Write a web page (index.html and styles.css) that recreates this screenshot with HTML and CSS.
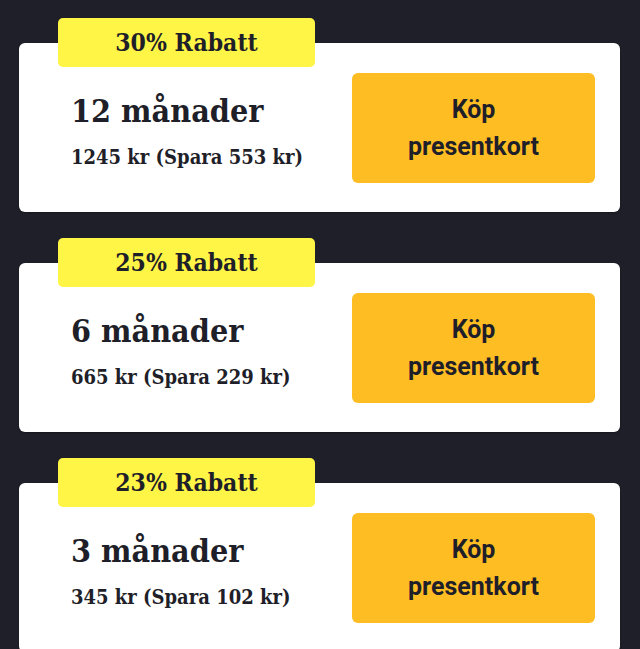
FILE: index.html
```html
<!DOCTYPE html>
<html lang="sv">
<head>
<meta charset="utf-8">
<title>Presentkort</title>
<link rel="stylesheet" href="styles.css">
</head>
<body>
<main class="list">
  <section class="offer">
    <div class="badge">30% Rabatt</div>
    <div class="card">
      <div class="info">
        <h2 class="title">12 månader</h2>
        <p class="price">1245 kr (Spara 553 kr)</p>
      </div>
      <button class="buy">Köp<br>presentkort</button>
    </div>
  </section>
  <section class="offer">
    <div class="badge">25% Rabatt</div>
    <div class="card">
      <div class="info">
        <h2 class="title">6 månader</h2>
        <p class="price">665 kr (Spara 229 kr)</p>
      </div>
      <button class="buy">Köp<br>presentkort</button>
    </div>
  </section>
  <section class="offer">
    <div class="badge">23% Rabatt</div>
    <div class="card">
      <div class="info">
        <h2 class="title">3 månader</h2>
        <p class="price">345 kr (Spara 102 kr)</p>
      </div>
      <button class="buy">Köp<br>presentkort</button>
    </div>
  </section>
</main>
</body>
</html>
```
FILE: styles.css
```css
html, body {
  margin: 0;
  background: #1f1f29;
}
body {
  height: 649px;
  overflow: hidden;
}
.list {
  display: flex;
  flex-direction: column;
  gap: 26px;
  padding: 18px 20px 0 19px;
}
.offer {
  display: flex;
  flex-direction: column;
}
.badge {
  position: relative;
  z-index: 1;
  margin-left: 39px;
  width: 257px;
  height: 49px;
  box-sizing: border-box;
  background: #fff546;
  border-radius: 5px;
  display: flex;
  align-items: center;
  justify-content: center;
  font-family: "DejaVu Serif Condensed", "DejaVu Serif", serif;
  font-stretch: condensed;
  font-weight: 700;
  font-size: 24.5px;
  color: #1f1f29;
}
.card {
  margin-top: -24px;
  height: 169px;
  box-sizing: border-box;
  background: #ffffff;
  border-radius: 6px;
  display: flex;
  align-items: center;
  justify-content: space-between;
  padding: 0 25px 0 52px;
  box-shadow: 0 1px 2px rgba(0,0,0,0.3);
}
.info {
  padding-top: 6px;
  color: #1f1f29;
}
.title {
  margin: 0;
  font-family: "DejaVu Serif Condensed", "DejaVu Serif", serif;
  font-stretch: condensed;
  font-weight: 700;
  font-size: 32px;
  line-height: 40px;
}
.price {
  margin: 12px 0 0;
  font-family: "DejaVu Serif Condensed", "DejaVu Serif", serif;
  font-stretch: condensed;
  font-weight: 700;
  font-size: 20px;
  line-height: 28px;
}
.buy {
  width: 243px;
  height: 110px;
  border: none;
  border-radius: 6px;
  background: #ffbd24;
  color: #1f1f29;
  font-family: Roboto, "Noto Sans", sans-serif;
  font-weight: 700;
  font-size: 25px;
  line-height: 37px;
  padding: 0;
}
```
